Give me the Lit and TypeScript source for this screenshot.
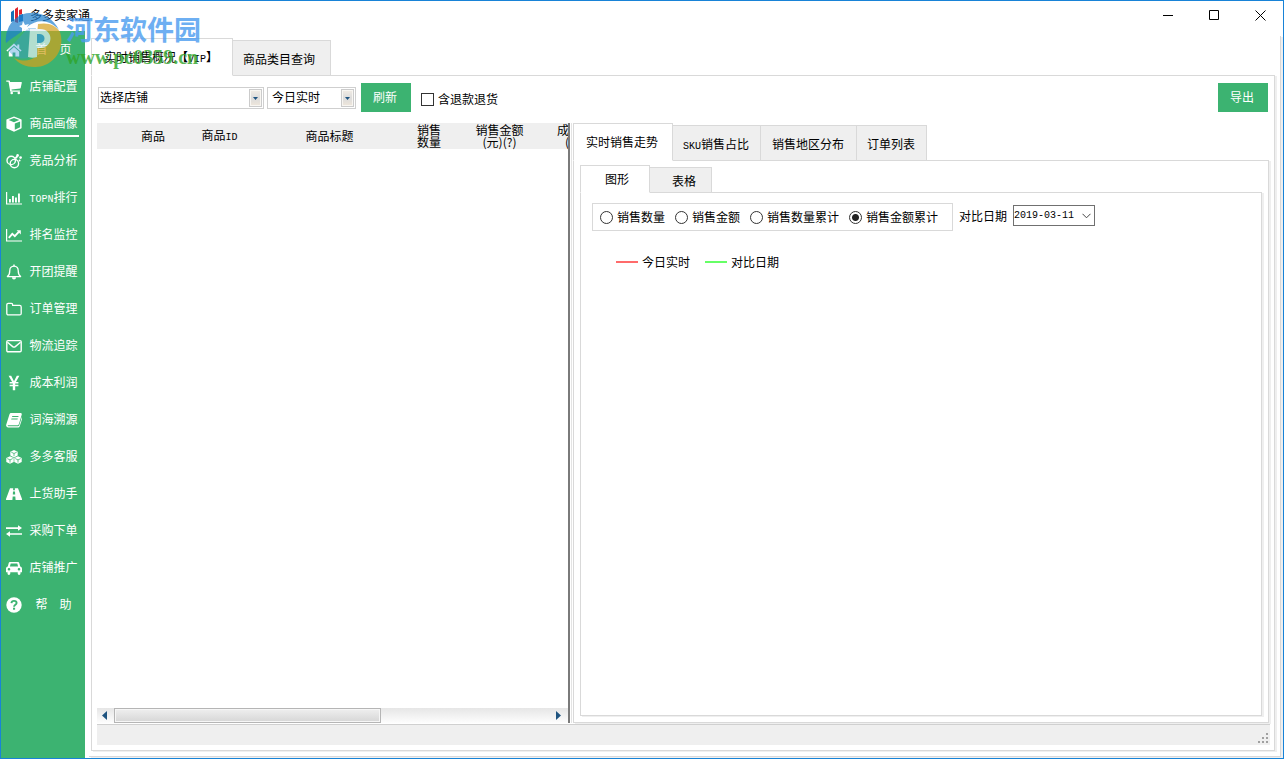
import { LitElement, html, css, svg } from "lit";
import { customElement, state, property } from "lit/decorators.js";
import { classMap } from "lit/directives/class-map.js";

const icons: Record<string, unknown> = {
  home: svg`<path d="M8 1.6 0.4 8.4l1 1.1L8 3.8l6.6 5.7 1-1.1-2.3-2V2.4h-2v2.1z"/><path d="M8 5 2.8 9.5V14.4h3.8v-3.8h2.8v3.8h3.8V9.5z"/>`,
  cart: svg`<path d="M0.3 1.4h2.9c.4 0 .6.3.7.7l.2 1h11.3c.3 0 .5.3.4.6l-1.1 5.3c-.1.3-.3.5-.6.5l-8.6 1 .2 1h8.2v1.3H4.9c-.4 0-.6-.3-.7-.6L2.5 2.8H.3z"/><circle cx="5.7" cy="14" r="1.3"/><circle cx="12.8" cy="14" r="1.3"/>`,
  cube: svg`<path d="M8 .5 15 3.3c.4.2.6.4.6.8v7.6c0 .4-.2.7-.5.9L8 15.8.9 12.600c-.3-.2-.5-.5-.5-.9V4.100c0-.4.200-.6.600-.8zM8 2 2.700 4.100 8 6.300l5.300-2.200zM8.800 7.600v6.100l5.300-2.500V5.400z" fill-rule="evenodd"/>`,
  rings: svg`<g fill="none" stroke="#fff" stroke-width="1.400"><circle cx="5.200" cy="7.400" r="4.200"/><circle cx="8.400" cy="10.600" r="4.200"/></g><path d="m8.600 4.800 2.200-2.200 1.400 1.200-2.200 2.200z"/><circle cx="11.600" cy="2.400" r="1.300"/><circle cx="14.600" cy="4.600" r="1.300"/><circle cx="13.600" cy="7.400" r="1"/>`,
  bars: svg`<path d="M0 2h1.200v11.400H16v1.200H0z"/><path d="M3 9h1.900v3.600H3zM6 6h1.900v6.600H6zM9 7.500h1.900v5.100H9zM12 3.500h1.900v9.100H12z"/>`,
  line: svg`<path d="M0 2h1.200v11.400H16v1.200H0z"/><path d="m2.800 10.800 3.500-3.900 2.500 2.200 4-4.300" fill="none" stroke="#fff" stroke-width="1.900"/><path d="M10.600 3.200h4.200v4.300z"/>`,
  bell: svg`<path d="M8 2.100c-2.800 0-4.200 2-4.200 4.400 0 3.200-.9 4.900-2.400 6.100h13.200c-1.500-1.200-2.400-2.900-2.400-6.100 0-2.400-1.400-4.400-4.200-4.400z" fill="none" stroke="#fff" stroke-width="1.300" stroke-linejoin="round"/><path d="M7.300.4h1.400v2H7.300zM6 13.200h4c0 1.300-.8 2.300-2 2.300s-2-1-2-2.300z"/>`,
  folder: svg`<path d="M.8 12.400V3.900c0-.9.600-1.500 1.500-1.500h3c.8 0 1.400.6 1.400 1.500v.5h7c.9 0 1.500.6 1.500 1.500v6.500c0 .9-.6 1.500-1.500 1.500H2.300c-.9 0-1.500-.6-1.500-1.500z" fill="none" stroke="#fff" stroke-width="1.300"/>`,
  mail: svg`<rect x=".8" y="2.600" width="14.400" height="11.200" rx="1.200" fill="none" stroke="#fff" stroke-width="1.400"/><path d="m1.500 4.300 5.200 4.300c.8.600 1.800.6 2.600 0l5.200-4.300" fill="none" stroke="#fff" stroke-width="1.400"/>`,
  yen: svg`<path d="M2.600.8h2.600L8 6.200 10.800.8h2.600L9.900 7h2.500v1.400H9.200v1.400h3.200v1.400H9.200v4H6.800v-4H3.600V9.800h3.200V8.400H3.600V7h2.500z"/>`,
  book: svg`<path d="M5.400 1h9c1.100 0 1.600.7 1.300 1.700l-2.700 9c-.3 1-1.100 1.500-2 1.500H2.200c-.8 0-.8 1 .2 1h9.500c.7 0 1.100-.2 1.300-.9L15.900 5c.5.300.5.900.3 1.500l-2.400 7.600c-.3 1-1.100 1.500-2 1.500H2.300C.8 15.600-.300 14 .200 12.700L3.500 2.300C3.800 1.400 4.400 1 5.400 1zm.9 2.900-.3 1h6.300l.3-1zm-.8 2.600-.3 1h6.300l.3-1z" fill-rule="evenodd"/>`,
  cubes: svg`<path d="m8 1 3.700 1.800v3.800L8 8.500 4.300 6.600V2.800zM4 7.300l3.700 1.700v3.900L4 14.800.3 12.900V9zm8 0L15.700 9v3.900L12 14.800l-3.700-1.900V9z"/><path d="M5.300 3.200 8 4.500l2.700-1.300M8 4.500v2.700M1.300 9.600 4 10.900l2.700-1.300M4 10.900v2.700M9.300 9.600l2.700 1.300 2.700-1.300M12 10.900v2.700" fill="none" stroke="#3cb371" stroke-width=".8"/>`,
  road: svg`<path d="M4 2.300h3.200l-.1 2h1.800l-.1-2H12l4 10.700c.2.600-.1 1-.5 1H9.600l-.3-3.500H6.700L6.400 14H.5c-.4 0-.7-.4-.5-1zM7 5.600l-.2 3h2.400L9 5.600z" fill-rule="evenodd"/>`,
  swap: svg`<path d="M0 4.300h12V2.200L16 5l-4 2.800V5.900H0zM16 10.200H4V8.200L0 11l4 2.800v-2H16z"/>`,
  car: svg`<path d="M4.400 2h7.200c.9 0 1.600.5 1.800 1.400l.8 3.100c1.100.2 1.800 1.100 1.800 2.200v3.500h-1.500v1.300a1.400 1.400 0 0 1-2.800 0v-1.300H4.300v1.300a1.400 1.400 0 0 1-2.800 0v-1.300H0V8.700c0-1.100.7-2 1.800-2.200l.8-3.100C2.800 2.500 3.500 2 4.400 2zm.3 1.600-.8 2.900h8.200l-.8-2.900zM3 8a1.300 1.300 0 1 0 0 2.600A1.300 1.300 0 0 0 3 8zm10 0a1.300 1.300 0 1 0 0 2.600A1.300 1.300 0 0 0 13 8z" fill-rule="evenodd"/>`,
  help: svg`<circle cx="8" cy="8" r="7.700"/><path d="M5.400 6.200C5.600 4.600 6.600 3.900 8 3.900c1.500 0 2.600.8 2.600 2.200 0 1.700-2.500 1.800-2.500 3.600" fill="none" stroke="#3cb371" stroke-width="1.900"/><path d="M7 10.700h2.100v2H7z" fill="#3cb371"/>`,
};

const navItems: [string, string, string?][] = [
  ["home", "首　页"],
  ["cart", "店铺配置"],
  ["cube", "商品画像"],
  ["rings", "竞品分析"],
  ["bars", "排行", "TOPN"],
  ["line", "排名监控"],
  ["bell", "开团提醒"],
  ["folder", "订单管理"],
  ["mail", "物流追踪"],
  ["yen", "成本利润"],
  ["book", "词海溯源"],
  ["cubes", "多多客服"],
  ["road", "上货助手"],
  ["swap", "采购下单"],
  ["car", "店铺推广"],
  ["help", "帮　助"],
];

const base = css`
  :host,
  button,
  select,
  input {
    font: 12px/16px "Noto Sans CJK SC", sans-serif;
    color: #000;
  }
  * {
    box-sizing: border-box;
  }
  button,
  select {
    margin: 0;
    padding: 0;
    border: 0;
    border-radius: 0;
    background: none;
  }
  .latin {
    font-family: "Liberation Mono", monospace;
    font-size: 10px;
    line-height: 10px;
  }
`;

@customElement("side-nav")
class SideNav extends LitElement {
  @state() active = 2;

  static styles = [
    base,
    css`
      :host {
        display: block;
        background: #3cb371;
      }
      .item {
        display: flex;
        align-items: center;
        gap: 6px;
        height: 37px;
        padding-left: 5px;
        color: #fff;
        text-decoration: none;
      }
      .icon {
        width: 16px;
        height: 16px;
        fill: #fff;
      }
      .label {
        width: 51px;
        height: 26px;
        line-height: 24px;
        text-align: center;
        white-space: nowrap;
        border-bottom: 2px solid transparent;
      }
      .active {
        border-bottom-color: #fff;
      }
    `,
  ];

  render() {
    return html`<nav>
      ${navItems.map(
        ([icon, text, prefix], i) => html`<a class="item" href="#" @click=${(e: Event) => {
          e.preventDefault();
          this.active = i;
        }}
          ><svg class="icon" viewBox="0 0 16 16" aria-hidden="true">${icons[icon]}</svg
          ><span class=${classMap({ label: true, active: i === this.active })}
            >${prefix ? html`<span class="latin">${prefix}</span>` : ""}${text}</span
          ></a
        >`
      )}
    </nav>`;
  }
}

@customElement("drop-down")
class DropDown extends LitElement {
  @property() label = "";
  @property() value = "";

  static styles = [
    base,
    css`
      :host {
        display: block;
      }
      .box {
        display: flex;
        position: relative;
        height: 22px;
        border: 1px solid #cfcfcf;
      }
      .select {
        flex: 1;
        min-width: 0;
        padding: 0 18px 2px var(--indent, 1px);
        appearance: none;
        outline: 0;
      }
      .arrow {
        position: absolute;
        right: 1px;
        top: 1px;
        width: 13px;
        height: 18px;
        border: 1px solid #cbcbcb;
        box-shadow: inset 0 0 0 1px #f8f6f2;
        background: linear-gradient(#f2ece4, #dcdcdc 50%, #efe6da);
        pointer-events: none;
      }
      .glyph {
        display: block;
        width: 5px;
        height: 3px;
        margin: 7px 3px;
        fill: #1f5480;
      }
    `,
  ];

  render() {
    return html`<div class="box">
      <select class="select" aria-label=${this.label}>
        <option>${this.value}</option>
      </select>
      <span class="arrow"><svg class="glyph" viewBox="0 0 5 3"><path d="M0 0h5L2.500 3z" /></svg></span>
    </div>`;
  }
}

@customElement("site-mark")
class SiteMark extends LitElement {
  static styles = [
    base,
    css`
      :host {
        display: flex;
        align-items: flex-start;
        gap: 4px;
      }
      .emblem {
        width: 58px;
        height: 58px;
        opacity: 0.7;
      }
      .words {
        display: grid;
        padding-top: 3px;
        opacity: 0.8;
      }
      .name {
        font-size: 27px;
        line-height: 32px;
        font-weight: bold;
        color: #4a9cf0;
      }
      .url {
        font: bold 20px/24px "Liberation Serif", serif;
        color: #2fa52a;
      }
    `,
  ];

  render() {
    return html`<svg class="emblem" viewBox="0 0 58 58" aria-hidden="true">
        <path d="M2 33A27 27 0 0 1 17 5C31-1 48 5 55 20 45 9 33 9 23 17 14 25 8 28 2 33z" fill="#1e7fce" />
        <path d="M4 40 24 18h8l-8 30c-8 2-15-1-20-8z" fill="#3a96d8" opacity=".55" />
        <path d="M34 14c10-2 18 1 22 8 6 18-8 36-26 35-8 0-15-3-20-9 9 4 16 3 21-1z" fill="#d5a11c" />
        <path d="M26 19h10c14 0 14 19 0 19h-3v9c-3 1-6 1-9 0z" fill="#e6f1f8" />
        <path d="M33 24h3c6 0 6 9 0 9h-3z" fill="#3a96d8" />
        <path d="m19 11 2 4 4-1-2 3 2 3-4-1-3 3v-4l-3-2 3-1z" fill="#fff" />
      </svg>
      <div class="words"><span class="name">河东软件园</span><span class="url">www.pc0359.cn</span></div>`;
  }
}

@customElement("goods-list")
class GoodsList extends LitElement {
  static styles = [
    base,
    css`
      :host {
        display: flex;
        flex-direction: column;
        min-width: 0;
        overflow: hidden;
      }
      .view {
        flex: 1;
        overflow: hidden;
      }
      .table {
        table-layout: fixed;
        width: 506px;
        border-collapse: collapse;
        background: #efefef;
      }
      .table th {
        height: 26px;
        padding: 0;
        font-weight: normal;
        line-height: 12px;
        white-space: nowrap;
      }
      .grip { width: 23px; }
      .goods { width: 66px; }
      .id { width: 67px; }
      .title { width: 153px; }
      .count { width: 46px; }
      .amount { width: 95px; }
      .cost { width: 56px; }
      .bar {
        display: flex;
        height: 15px;
        background: linear-gradient(#e6e6e6, #fdfdfd);
      }
      .step {
        display: flex;
        align-items: center;
        width: 17px;
        height: 15px;
        padding: 0 5px;
      }
      .tri {
        width: 5px;
        height: 9px;
        fill: #1f5480;
      }
      .track {
        flex: 1;
      }
      .thumb {
        width: 61%;
        height: 15px;
        border: 1px solid #b5b5b5;
        box-shadow: inset 0 0 0 1px #f6f6f6;
        background: linear-gradient(#efefef, #d6d6d6);
      }
    `,
  ];

  render() {
    return html`<div class="view">
        <table class="table">
          <thead>
            <tr>
              <th class="grip"></th>
              <th class="goods">商品</th>
              <th class="id">商品<span class="latin">ID</span></th>
              <th class="title">商品标题</th>
              <th class="count">销售<br />数量</th>
              <th class="amount">销售金额<br />(元)(?)</th>
              <th class="cost">成本价<br />(元)</th>
            </tr>
          </thead>
        </table>
      </div>
      <div class="bar">
        <button class="step" aria-label="向左"><svg class="tri" viewBox="0 0 5 9"><path d="M5 0v9L0 4.500z" /></svg></button>
        <div class="track"><div class="thumb"></div></div>
        <button class="step" aria-label="向右"><svg class="tri" viewBox="0 0 5 9"><path d="M0 0v9l5-4.500z" /></svg></button>
      </div>`;
  }
}

const tabStyles = css`
  .tabs {
    display: flex;
    align-items: flex-end;
    position: relative;
  }
  .tab {
    height: 36px;
    padding: 2px 11px 0 10px;
    border: 1px solid #d9d9d9;
    border-left-width: 0;
    background: #efefef;
    margin-bottom: -1px;
    white-space: nowrap;
  }
  .tab.wide {
    padding: 2px 12px 0 11px;
  }
  .tab.roomy {
    padding: 2px 15px 0 10px;
  }
  .tab.current {
    height: 38px;
    padding: 0 14px 0 12px;
    border-left-width: 1px;
    border-bottom-color: #fff;
    background: #fff;
  }
  .page {
    flex: 1;
    display: flex;
    flex-direction: column;
    min-height: 0;
    border: 1px solid #d9d9d9;
    box-shadow: 2px 1px 0 #efefef;
  }
`;

@customElement("trend-panel")
class TrendPanel extends LitElement {
  @state() metric = 3;

  static styles = [
    base,
    tabStyles,
    css`
      :host {
        display: flex;
        flex-direction: column;
        min-width: 0;
        margin-right: 1px;
      }
      .outer {
        padding: 4px 6px 6px;
      }
      .small .tab {
        height: 26px;
        padding: 2px 15px 0 22px;
      }
      .small .tab.current {
        height: 28px;
        padding: 0 20px 0 24px;
      }
      .chart {
        padding: 10px 11px;
      }
      .filters {
        display: flex;
        align-items: flex-start;
        gap: 6px;
      }
      .group {
        display: flex;
        align-items: center;
        gap: 10px;
        height: 28px;
        margin: 0;
        padding: 0 14px 0 7px;
        border: 1px solid #d9d9d9;
      }
      .choice {
        display: flex;
        align-items: center;
        gap: 4px;
        white-space: nowrap;
      }
      .radio {
        appearance: none;
        width: 13px;
        height: 13px;
        margin: 0;
        border: 1px solid #333;
        border-radius: 50%;
        background: #fff;
      }
      .radio:checked {
        background: radial-gradient(circle, #222 3px, #fff 4px);
      }
      .date {
        display: flex;
        align-items: center;
        gap: 6px;
        padding-top: 2px;
      }
      .date-box {
        display: grid;
        position: relative;
      }
      .date-select {
        width: 82px;
        height: 21px;
        padding: 0 18px 0 0;
        border: 1px solid #707070;
        appearance: none;
        font-family: "Liberation Mono", monospace;
        font-size: 10px;
      }
      .chevron {
        position: absolute;
        right: 4px;
        top: 8px;
        width: 9px;
        height: 6px;
        pointer-events: none;
      }
      .legend {
        display: flex;
        gap: 15px;
        padding: 23px 24px;
      }
      .key {
        display: flex;
        align-items: center;
        gap: 4px;
      }
      .swatch {
        width: 22px;
        height: 2px;
        background: #ff6b6b;
      }
      .swatch.past {
        background: #66ff66;
      }
    `,
  ];

  render() {
    const metrics = ["销售数量", "销售金额", "销售数量累计", "销售金额累计"];
    return html`<div class="tabs">
        <button class="tab current">实时销售走势</button>
        <button class="tab"><span class="latin">SKU</span>销售占比</button>
        <button class="tab wide">销售地区分布</button>
        <button class="tab">订单列表</button>
      </div>
      <section class="page outer">
        <div class="tabs small">
          <button class="tab current">图形</button>
          <button class="tab">表格</button>
        </div>
        <div class="page chart">
          <div class="filters">
            <div class="group" role="radiogroup" aria-label="指标">
              ${metrics.map(
                (m, i) => html`<label class="choice"
                  ><input class="radio" type="radio" name="metric" .checked=${i === this.metric}
                    @change=${() => (this.metric = i)} />${m}</label
                >`
              )}
            </div>
            <div class="date">
              <label for="compare">对比日期</label>
              <div class="date-box">
                <select class="date-select" id="compare">
                  <option>2019-03-11</option>
                </select>
                <svg class="chevron" viewBox="0 0 9 6"><path d="m.5.8 4 4 4-4" fill="none" stroke="#444" /></svg>
              </div>
            </div>
          </div>
          <div class="legend">
            <span class="key"><i class="swatch"></i>今日实时</span>
            <span class="key"><i class="swatch past"></i>对比日期</span>
          </div>
        </div>
      </section>`;
  }
}

@customElement("app-root")
class AppRoot extends LitElement {
  static styles = [
    base,
    tabStyles,
    css`
      :host {
        display: block;
      }
      .window {
        display: flex;
        flex-direction: column;
        position: relative;
        height: 100vh;
        min-height: 660px;
        border: 1px solid #1883d7;
        background: #fff;
      }
      .titlebar {
        display: flex;
        align-items: center;
        gap: 6px;
        height: 30px;
        padding: 0 0 2px 9px;
      }
      .logo {
        width: 14px;
        height: 18px;
      }
      .name {
        flex: 1;
      }
      .controls {
        display: flex;
      }
      .ctrl {
        display: grid;
        place-items: center;
        width: 46px;
        height: 28px;
      }
      .ctrl svg {
        width: 11px;
        height: 11px;
        fill: none;
        stroke: #000;
      }
      .body {
        flex: 1;
        display: flex;
        min-height: 0;
      }
      .nav {
        flex: 0 0 84px;
      }
      .frame {
        flex: 1;
        display: flex;
        flex-direction: column;
        min-width: 0;
        margin: 5px 2px 1px 4px;
        padding: 2px 5px 5px 2px;
        border: solid #d9d9d9;
        border-width: 0 1px 1px 0;
        box-shadow: 2px 1px 0 #efefef;
      }
      .main {
        padding: 7px 4px 5px 5px;
      }
      .tools {
        display: flex;
        align-items: flex-start;
        padding: 0 2px 11px 1px;
      }
      .pick {
        margin-top: 4px;
      }
      .shop {
        width: 166px;
        margin-right: 3px;
      }
      .period {
        width: 89px;
        margin-right: 5px;
        --indent: 4px;
      }
      .green {
        width: 50px;
        height: 29px;
        padding: 0 2px 1px 0;
        background: #3cb371;
        color: #fff;
      }
      .check {
        display: flex;
        align-items: center;
        gap: 4px;
        margin: 8px auto 0 10px;
      }
      .box {
        appearance: none;
        width: 13px;
        height: 13px;
        margin: 0;
        border: 1px solid #333;
      }
      .box:checked {
        background: #333;
      }
      .split {
        flex: 1;
        display: grid;
        grid-template-columns: 471px 5px 1fr;
        min-height: 0;
      }
      .divider {
        border-left: 2px solid #7a7a7a;
        border-right: 1px solid #e4e4e4;
        margin-right: 1px;
      }
      .status {
        display: flex;
        justify-content: flex-end;
        align-items: flex-end;
        height: 21px;
        margin-top: 1px;
        padding: 1px;
        border-top: 1px solid #d0d0d0;
        background: #efefef;
      }
      .grip {
        width: 11px;
        height: 11px;
        fill: #a0a0a0;
      }
      .mark {
        position: absolute;
        left: 3px;
        top: 9px;
        pointer-events: none;
      }
    `,
  ];

  render() {
    return html`<div class="window">
      <header class="titlebar">
        <svg class="logo" viewBox="0 0 14 18" aria-hidden="true">
          <path d="M1 6 4 4v11l-3 1zM9 9l4-1v7l-4 1z" fill="#1673b8" />
          <path d="m5 3 3-2v16l-3-1zM9 4l3-1v5L9 9z" fill="#e0242c" />
        </svg>
        <span class="name">多多卖家通</span>
        <div class="controls">
          <button class="ctrl" aria-label="最小化"><svg viewBox="0 0 11 11"><path d="M0 5.500h10" /></svg></button>
          <button class="ctrl" aria-label="最大化"><svg viewBox="0 0 11 11"><path d="M.5.500h9v9h-9z" /></svg></button>
          <button class="ctrl" aria-label="关闭"><svg viewBox="0 0 11 11"><path d="m.5.500 10 10m0-10-10 10" /></svg></button>
        </div>
      </header>
      <div class="body">
        <side-nav class="nav"></side-nav>
        <main class="frame">
          <div class="tabs">
            <button class="tab current">实时销售概况【<span class="latin">VIP</span>】</button>
            <button class="tab roomy">商品类目查询</button>
          </div>
          <section class="page main">
            <div class="tools">
              <drop-down class="pick shop" label="店铺" value="选择店铺"></drop-down>
              <drop-down class="pick period" label="时段" value="今日实时"></drop-down>
              <button class="green">刷新</button>
              <label class="check"><input class="box" type="checkbox" />含退款退货</label>
              <button class="green">导出</button>
            </div>
            <div class="split">
              <goods-list></goods-list>
              <div class="divider"></div>
              <trend-panel></trend-panel>
            </div>
            <footer class="status">
              <svg class="grip" viewBox="0 0 11 11" aria-hidden="true">
                <path d="M8 0h2v2H8zM4 4h2v2H4zM8 4h2v2H8zM0 8h2v2H0zM4 8h2v2H4zM8 8h2v2H8z" />
              </svg>
            </footer>
          </section>
        </main>
      </div>
      <site-mark class="mark"></site-mark>
    </div>`;
  }
}
